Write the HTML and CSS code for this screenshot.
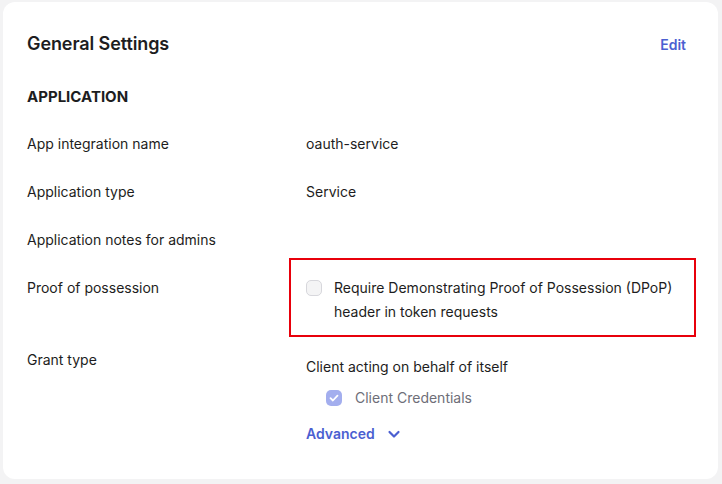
FILE: index.html
```html
<!DOCTYPE html>
<html lang="en">
<head>
<meta charset="UTF-8" />
<meta name="viewport" content="width=device-width, initial-scale=1" />
<title>General Settings</title>
<link rel="stylesheet" href="styles.css">
</head>
<body>
  <main class="card">
    <header class="card-header">
      <h2>General Settings</h2>
      <a href="#" class="edit-link">Edit</a>
    </header>

    <h3 class="section-title">APPLICATION</h3>

    <dl class="settings">
      <div class="row">
        <dt>App integration name</dt>
        <dd>oauth-service</dd>
      </div>
      <div class="row">
        <dt>Application type</dt>
        <dd>Service</dd>
      </div>
      <div class="row">
        <dt>Application notes for admins</dt>
        <dd></dd>
      </div>
      <div class="row">
        <dt>Proof of possession</dt>
        <dd class="highlighted">
          <label class="check">
            <span class="box"></span>
            <span>Require Demonstrating Proof of Possession (DPoP)<br>header in token requests</span>
          </label>
        </dd>
      </div>
      <div class="row">
        <dt>Grant type</dt>
        <dd class="grant">
          <p class="grant-group">Client acting on behalf of itself</p>
          <label class="check nested disabled">
            <span class="box checked">
              <svg viewBox="0 0 16 16" width="16" height="16"><path d="M4.5 8.2l2.4 2.3 4.6-4.8" fill="none" stroke="#fff" stroke-width="1.8" stroke-linecap="round" stroke-linejoin="round"/></svg>
            </span>
            <span>Client Credentials</span>
          </label>
          <a href="#" class="advanced">Advanced
            <svg viewBox="0 0 16 16" width="16" height="16"><path d="M3.5 6l4.5 4.5L12.5 6" fill="none" stroke="currentColor" stroke-width="2.2" stroke-linecap="round" stroke-linejoin="round"/></svg>
          </a>
        </dd>
      </div>
    </dl>
  </main>
</body>
</html>
```

FILE: styles.css
```css
* {
  box-sizing: border-box;
}
body {
  margin: 0;
  padding: 2px 4px 0 3px;
  background: #f3f3f4;
  font-family: Inter, "Noto Sans", sans-serif;
  color: #1d1d21;
  font-size: 14px;
}
/* Card */
.card {
  background: #fff;
  border-radius: 12px;
  padding: 28px 32px 0 24px;
  height: 477px;
}
.card-header {
  display: flex;
  justify-content: space-between;
  align-items: center;
}
.card-header h2 {
  margin: 0;
  font-size: 18px;
  line-height: 28px;
  font-weight: 600;
  letter-spacing: -0.1px;
}
.edit-link {
  color: #4b5fd1;
  font-weight: 600;
  text-decoration: none;
}
.section-title {
  margin: 27px 0 11px;
  font-size: 15px;
  line-height: 24px;
  font-weight: 700;
}
/* Rows */
.settings {
  margin: 0;
}
.row {
  display: grid;
  grid-template-columns: 279px 1fr;
  padding: 12px 0;
  line-height: 24px;
}
.row dt,
.row dd {
  margin: 0;
}
.row dd {
  min-height: 24px;
}
.highlighted {
  position: relative;
}
.highlighted::after {
  content: "";
  position: absolute;
  top: -18px;
  left: -17px;
  right: -10px;
  bottom: -13px;
  border: 2px solid #e8000b;
  pointer-events: none;
}
/* Checkboxes */
.check {
  display: flex;
  align-items: flex-start;
  gap: 12px;
}
.box {
  flex: none;
  width: 16px;
  height: 16px;
  margin-top: 4px;
  border: 1px solid #d7d7dc;
  border-radius: 5px;
  background: #f4f4f5;
}
.box.checked {
  border: none;
  background: #a3aeee;
}
.box svg {
  display: block;
}
.check.nested {
  margin: 7px 0 0 20px;
  gap: 13px;
}
.check.disabled {
  color: #6e6e78;
}
.grant {
  padding-top: 7px;
}
.grant-group {
  margin: 0;
}
.advanced {
  display: inline-flex;
  align-items: center;
  gap: 11px;
  margin-top: 12px;
  color: #4b5fd1;
  font-weight: 600;
  text-decoration: none;
}
```
